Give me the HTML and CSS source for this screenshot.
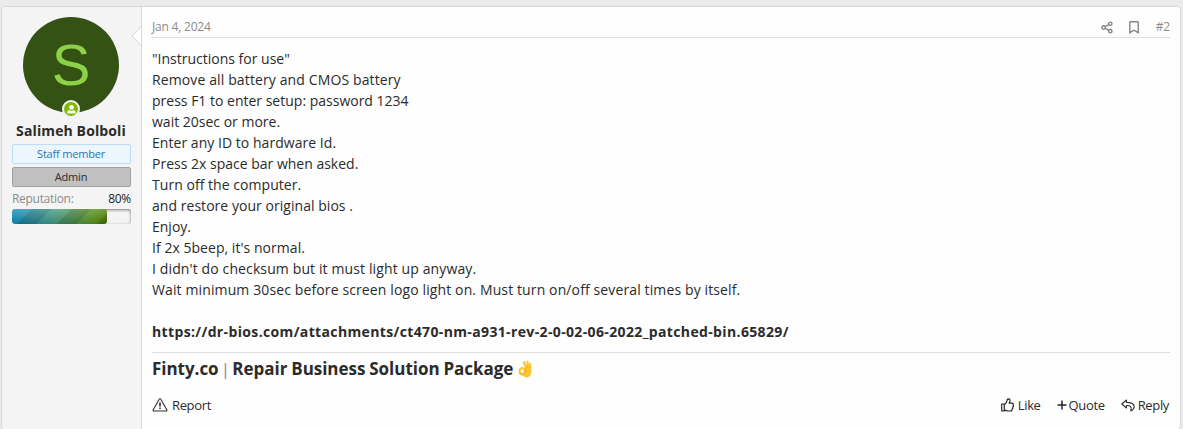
FILE: index.html
```html
<!DOCTYPE html>
<html lang="en">
<head>
<meta charset="utf-8">
<title>Post #2</title>
<link rel="stylesheet" href="styles.css">
</head>
<body>
<article class="message">
  <aside class="user">
    <div class="avatar">S
      <span class="online"><svg width="13" height="13" viewBox="0 0 13 13"><circle cx="6.5" cy="4.4" r="2.3" fill="#fff"/><path d="M2.2 10.4V9Q2.2 7.4 4.4 7.2Q6.5 8.5 8.6 7.2Q10.8 7.4 10.8 9V10.4Z" fill="#fff"/></svg></span>
    </div>
    <h4 class="name">Salimeh Bolboli</h4>
    <div class="banner staff">Staff member</div>
    <div class="banner admin">Admin</div>
    <div class="reputation"><span>Reputation:</span><b>80%</b></div>
    <div class="meter"><div class="meter-fill"></div></div>
  </aside>
  <div class="main">
    <span class="pointer"></span>
    <header class="attribution">
      <time>Jan 4, 2024</time>
      <div class="tools">
        <svg class="share" width="12" height="13" viewBox="0 0 12 13" fill="none" stroke="#858585" stroke-width="1.4"><circle cx="2.6" cy="6.5" r="1.7"/><circle cx="9.3" cy="2.8" r="1.7"/><circle cx="9.3" cy="10.2" r="1.7"/><path d="M4.2 5.6L7.8 3.6M4.2 7.4L7.8 9.4"/></svg>
        <svg class="bookmark" width="10" height="13" viewBox="0 0 10 13" fill="none" stroke="#858585" stroke-width="1.4"><path d="M.8 1.5Q.8.8 1.5.8H8.5Q9.2.8 9.2 1.5V11.7L5 9.2L.8 11.7Z"/></svg>
        <span>#2</span>
      </div>
    </header>
    <div class="body">
      <p>"Instructions for use"</p>
      <p class="wide">Remove all battery and CMOS battery</p>
      <p>press F1 to enter setup: password 1234</p>
      <p>wait 20sec or more.</p>
      <p class="snug">Enter any ID to hardware Id.</p>
      <p>Press 2x space bar when asked.</p>
      <p class="snug">Turn off the computer.</p>
      <p class="snug">and restore your original bios .</p>
      <p>Enjoy.</p>
      <p class="snug">If 2x 5beep, it's normal.</p>
      <p class="wide">I didn't do checksum but it must light up anyway.</p>
      <p class="wide">Wait minimum 30sec before screen logo light on. Must turn on/off several times by itself.</p>
      <p class="link">https://dr-bios.com/attachments/ct470-nm-a931-rev-2-0-02-06-2022_patched-bin.65829/</p>
    </div>
    <div class="signature"><span><strong>Finty.co</strong> <i>|</i> <strong>Repair Business Solution Package</strong></span>
      <svg width="14" height="18" viewBox="0 0 14 18"><path d="M5.2 1.2Q6.5.3 7.2 2L9 6.2L8.3 1.5Q9.5.1 10.3 1.6L11.5 5.8L11.4 3Q13 2.3 13.3 4.5L13.5 9.5Q13.8 15.7 10 17.2Q6.7 18 5.6 15.7Q1 16 .5 12Q.3 7.5 4 7.1Q6.4 7 7.2 8.6L5 3Q4.4 1.8 5.2 1.2Z" fill="#ffc52f"/><path d="M3 9.5Q5.8 8.8 6.2 11.2Q6.1 13.7 4 13.6Q1.9 12 3 9.5Z" fill="#fff"/><path d="M2.3 12.7Q4 15 7 13.2Q8.5 11.7 7.3 8.6" fill="none" stroke="#ee9d24"/><path d="M9 6.2L9.7 8M11.5 5.8L11.7 8" stroke="#f0a526" stroke-width=".7"/></svg>
    </div>
    <footer class="actions">
      <a class="report"><svg width="16" height="14" viewBox="0 0 16 14" fill="none" stroke="#303030" stroke-width="1.1" stroke-linejoin="round"><path d="M7.2 1.3Q8 .2 8.8 1.3L14.8 11.7Q15.3 12.9 14 13H2Q.7 12.9 1.2 11.7Z"/><path d="M8 4.5V8.4M8 9.5V11.1" stroke-width="1.6"/></svg>Report</a>
      <a class="like"><svg width="13" height="14" viewBox="0 0 13 14" fill="none" stroke="#252525" stroke-width="1.2" stroke-linejoin="round"><path d="M.7 6H3.3V13H.7ZM3.3 6.5Q6.1 4.4 6.1 2.2Q6.3.8 7.4.8Q9.5 1 8.9 3.2L8.2 5.2H11Q12.7 5.4 12.2 7Q12.8 8.2 11.8 9Q12.2 10.4 11.1 11Q11.2 13 9.3 13H7.1Q5 13 3.3 11.8"/></svg>Like</a>
      <a class="quote"><svg width="10" height="10" viewBox="0 0 10 10" stroke="#252525" stroke-width="1.5"><path d="M5 .5V9.5M.5 5H9.5"/></svg>Quote</a>
      <a class="reply"><svg width="14" height="13" viewBox="0 0 14 13" fill="none" stroke="#303030" stroke-width="1.1" stroke-linejoin="round"><path d="M5.5 1L.8 5L5.5 9V6.6Q11.5 6.1 9.8 12Q13.2 10.2 13.2 7.4Q12.9 3.5 5.5 3.4Z"/></svg>Reply</a>
    </footer>
  </div>
</article>
</body>
</html>
```
FILE: styles.css
```css
* { box-sizing: border-box; }
body { margin: 0; height: 429px; padding: 6px 2px 0 1px; background: #ebebeb; font-family: "Open Sans", "Noto Sans", sans-serif; color: #2b2b2b; overflow: hidden; }
h4, p { margin: 0; }
svg { display: block; flex: none; }
.message { display: flex; height: 424px; border: 1px solid #d8d8d8; border-radius: 4px; background: #fefefe; }
.user { width: 140px; flex: none; padding: 10px 10px 0; background: #f4f4f4; border-right: 1px solid #d8d8d8; border-radius: 3px 0 0 3px; }
.avatar { position: relative; width: 96px; height: 96px; margin: 0 0 0 11px; border-radius: 50%; background: #335214; color: #8cd147; font: 58px/96px "Liberation Sans", sans-serif; text-align: center; }
.online { position: absolute; left: 39px; top: 83px; width: 18px; height: 18px; border: 2px solid #f4f4f4; border-radius: 50%; background: #7fb900; padding: .5px; }
.name { width: 118px; height: 22px; margin-top: 7px; line-height: 22px; font-size: 14px; letter-spacing: .12px; text-align: center; white-space: nowrap; }
.banner { height: 20px; border: 1px solid; border-radius: 2px; font-size: 11px; line-height: 18px; text-align: center; letter-spacing: -.2px; padding-right: 1px; }
.staff { margin-top: 2px; color: #2577b1; background: #edf6fd; border-color: #b9def6; }
.admin { margin-top: 3px; background: #c0c0c0; border-color: #a1a1a1; }
.reputation { display: flex; justify-content: space-between; height: 20px; margin-top: 2px; font-size: 12px; line-height: 20px; letter-spacing: -.3px; color: #8c8c8c; }
.reputation b { font-weight: 400; color: #232323; }
.meter { height: 15px; border-radius: 3px; background: #f4f4f4; box-shadow: inset 0 1px 3px #777; overflow: hidden; }
.meter-fill { width: 95px; height: 15px; border-radius: 3px; background: linear-gradient(#fff3, #0002), linear-gradient(135deg, #0000 25%, #0002 25% 50%, #0000 50% 75%, #0002 75%) 0 0 / 40px 40px, linear-gradient(90deg, #0b91c1, #459d84 45%, #5b951c 85%, #4f8200); }
.main { position: relative; flex: 1; padding: 10px 10px 0; }
.pointer { position: absolute; left: -8px; top: 22px; width: 14px; height: 14px; transform: rotate(45deg); background: #fefefe; border: solid #d8d8d8; border-width: 0 0 1px 1px; clip-path: polygon(0 0, 100% 100%, 0 100%); }
.attribution { display: flex; justify-content: space-between; height: 21px; border-bottom: 1px solid #e0e0e0; font-size: 12px; line-height: 20px; letter-spacing: -.2px; color: #8c8c8c; }
.tools { display: flex; align-items: center; }
.bookmark { margin: 0 17px 0 16px; }
.body { height: 315px; padding-top: 10px; border-bottom: 1px solid #dedede; font-size: 14px; line-height: 21px; white-space: nowrap; }
.wide { letter-spacing: .12px; }
.snug { letter-spacing: .04px; }
.body .link { margin-top: 21px; font-weight: 700; letter-spacing: .362px; }
.signature { display: flex; align-items: center; gap: 5px; height: 31px; font-size: 17px; letter-spacing: -.03px; word-spacing: -.5px; white-space: nowrap; }
.signature i { margin: 0 -1.7px; font-style: normal; color: #888; }
.actions { display: flex; align-items: center; height: 22px; margin-top: 10px; padding-right: 1px; font-size: 13px; letter-spacing: -.35px; }
.actions a { display: flex; align-items: center; }
.report { gap: 4px; margin-right: auto; }
.like { gap: 4px; }
.quote { gap: 2px; margin: 0 16px; }
.reply { gap: 3px; }
```
